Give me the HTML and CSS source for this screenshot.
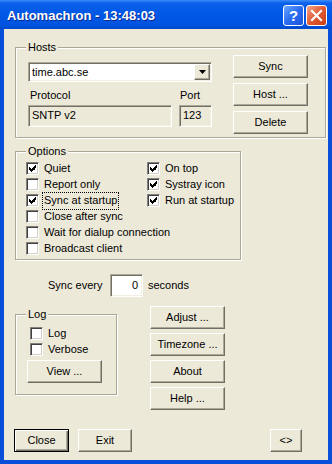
FILE: index.html
```html
<!DOCTYPE html>
<html lang="en">
<head>
    <meta charset="UTF-8">
    <meta name="viewport" content="width=device-width, initial-scale=1.0">
    <title>Automachron</title>
    <link rel="stylesheet" href="styles.css">
</head>
<body>
<div class="window">
    <div class="titlebar">
        <span class="title">Automachron - 13:48:03</span>
        <span class="tb-btn help">?</span>
        <span class="tb-btn close">
            <svg width="13" height="13" viewBox="0 0 13 13"><path d="M2 2 L11 11 M11 2 L2 11" stroke="#fff" stroke-width="2.2" stroke-linecap="square"/></svg>
        </span>
    </div>

    <div class="client">
        <!-- Hosts -->
        <div class="group hosts">
            <div class="legend">Hosts</div>
            <div class="hosts-row">
                <div class="hosts-left">
                    <div class="combo sunken">
                        <span class="combo-text">time.abc.se</span>
                        <span class="combo-btn">
                            <svg width="7" height="4" viewBox="0 0 7 4"><path d="M0 0 H7 L3.5 4 Z" fill="#000"/></svg>
                        </span>
                    </div>
                    <div class="field-labels">
                        <span class="lbl-protocol">Protocol</span>
                        <span>Port</span>
                    </div>
                    <div class="fields">
                        <div class="field sunken proto">SNTP v2</div>
                        <div class="field sunken port">123</div>
                    </div>
                </div>
                <div class="btn-col hosts-btns">
                    <button class="btn">Sync</button>
                    <button class="btn">Host ...</button>
                    <button class="btn">Delete</button>
                </div>
            </div>
        </div>

        <!-- Options -->
        <div class="group options">
            <div class="legend">Options</div>
            <div class="opts">
                <div class="opt-col first">
                    <div class="opt"><span class="check on"></span><span class="opt-label">Quiet</span></div>
                    <div class="opt"><span class="check"></span><span class="opt-label">Report only</span></div>
                    <div class="opt"><span class="check on"></span><span class="opt-label focus">Sync at startup</span></div>
                    <div class="opt"><span class="check"></span><span class="opt-label">Close after sync</span></div>
                    <div class="opt"><span class="check"></span><span class="opt-label">Wait for dialup connection</span></div>
                    <div class="opt"><span class="check"></span><span class="opt-label">Broadcast client</span></div>
                </div>
                <div class="opt-col">
                    <div class="opt"><span class="check on"></span><span class="opt-label">On top</span></div>
                    <div class="opt"><span class="check on"></span><span class="opt-label">Systray icon</span></div>
                    <div class="opt"><span class="check on"></span><span class="opt-label">Run at startup</span></div>
                </div>
            </div>
        </div>

        <div class="sync-row">
            <span class="sync-label">Sync every</span>
            <span class="num sunken">0</span>
            <span class="secs">seconds</span>
        </div>

        <div class="lower">
            <!-- Log -->
            <div class="group log">
                <div class="legend">Log</div>
                <div class="log-body">
                    <div class="opt indent"><span class="check"></span><span class="opt-label">Log</span></div>
                    <div class="opt indent"><span class="check"></span><span class="opt-label">Verbose</span></div>
                    <button class="btn view">View ...</button>
                </div>
            </div>
            <div class="btn-col side-btns">
                <button class="btn">Adjust ...</button>
                <button class="btn">Timezone ...</button>
                <button class="btn">About</button>
                <button class="btn">Help ...</button>
            </div>
        </div>

        <div class="bottom">
            <button class="btn default">Close</button>
            <button class="btn exit">Exit</button>
            <button class="btn toggle">&lt;&gt;</button>
        </div>
    </div>
</div>
</body>
</html>
```

FILE: styles.css
```css
* {
    box-sizing: border-box;
}
body {
    margin: 0;
    font-family: "Liberation Sans", Arial, sans-serif;
    font-size: 11px;
    line-height: 13px;
    color: #000;
}
.window {
    width: 332px;
    height: 464px;
    background: #0a4fd9;
    display: flex;
    flex-direction: column;
}
.titlebar {
    height: 29px;
    flex: none;
    display: flex;
    align-items: flex-start;
    background: linear-gradient(#3d8df7 0, #0b61ea 3px, #0058e6 45%, #0054e0 85%, #0049cc 100%);
}
.title {
    margin: 8px 0 0 7px;
    font-weight: bold;
    font-size: 13px;
    line-height: 15px;
    color: #fff;
    text-shadow: 1px 1px 0 #0d2a8c;
}
.tb-btn {
    margin-top: 5px;
    width: 21px;
    height: 21px;
    border: 1px solid #fff;
    border-radius: 3px;
    display: flex;
    align-items: center;
    justify-content: center;
}
.help {
    margin-left: auto;
    background: linear-gradient(135deg, #6aa6ff, #2a6cf0 50%, #1d55d8);
    color: #fff;
    font-weight: bold;
    font-size: 15px;
}
.close {
    margin: 5px 5px 0 2px;
    background: linear-gradient(135deg, #f3a78a, #e15a31 50%, #cc3f18);
}

.client {
    flex: 1;
    margin: 0 4px 4px;
    background: #ece9d8;
    display: flex;
    flex-direction: column;
}

/* group boxes */
.group {
    border: 1px solid #aca899;
    box-shadow: 1px 1px 0 #fff, inset 1px 1px 0 #fff;
}
.legend {
    width: max-content;
    margin: -7px 0 0 10px;
    padding: 0 2px;
    background: #ece9d8;
}
.sunken {
    border: 1px solid;
    border-color: #aca899 #fff #fff #aca899;
    box-shadow: inset 1px 1px 0 #716f64, inset -1px -1px 0 #f1efe2;
}

/* buttons */
.btn {
    display: block;
    width: 75px;
    height: 23px;
    padding: 0;
    font: inherit;
    color: #000;
    background: #ece9d8;
    border: 1px solid;
    border-color: #fff #716f64 #716f64 #fff;
    box-shadow: inset -1px -1px 0 #aca899;
}
.btn.default {
    border: 1px solid #000;
    box-shadow: inset 1px 1px 0 #fff, inset -1px -1px 0 #716f64, inset -2px -2px 0 #aca899;
}
.btn-col {
    display: flex;
    flex-direction: column;
    gap: 4px;
}

/* hosts */
.hosts {
    margin: 18px 2px 0 11px;
}
.hosts-row {
    display: flex;
    padding: 0 0 3px 12px;
}
.hosts-left {
    width: 184px;
    margin-top: 8px;
}
.hosts-btns {
    margin: 1px 0 0 21px;
    gap: 5px;
}
.combo {
    height: 20px;
    display: flex;
    align-items: center;
    background: #fff;
    padding-left: 3px;
}
.combo-text {
    flex: 1;
}
.combo-btn {
    width: 16px;
    height: 16px;
    margin-right: 1px;
    display: flex;
    align-items: center;
    justify-content: center;
    background: #ece9d8;
    border: 1px solid;
    border-color: #fff #716f64 #716f64 #fff;
    box-shadow: inset -1px -1px 0 #aca899;
}
.field-labels {
    display: flex;
    margin-top: 7px;
    padding-left: 2px;
}
.lbl-protocol {
    width: 150px;
}
.fields {
    display: flex;
    gap: 7px;
    margin-top: 3px;
}
.field {
    height: 22px;
    padding: 3px 3px;
}
.proto {
    width: 144px;
}
.port {
    width: 33px;
}

/* options */
.options {
    margin: 13px 0 0 11px;
    width: 226px;
}
.opts {
    display: flex;
    padding: 4px 0 1px 10px;
}
.opt-col.first {
    width: 121px;
}
.opt {
    display: flex;
    align-items: center;
    height: 13px;
    margin-bottom: 3px;
}
.check {
    flex: none;
    width: 13px;
    height: 13px;
    background: #fff;
    border: 1px solid;
    border-color: #808080 #fff #fff #808080;
    box-shadow: inset 1px 1px 0 #404040, inset -1px -1px 0 #d4d0c8;
}
.check.on {
    background: #fff url("data:image/svg+xml,%3Csvg xmlns='http://www.w3.org/2000/svg' width='7' height='7' shape-rendering='crispEdges'%3E%3Cpath d='M6 0h1v3h-1zM5 1h1v4h-1zM4 2h1v3h-1zM3 3h1v3h-1zM2 4h1v3h-1zM1 3h1v3h-1zM0 2h1v3h-1z' fill='%23000'/%3E%3C/svg%3E") no-repeat 2px 2px;
}
.opt-label {
    margin-left: 5px;
    white-space: nowrap;
}
.opt-label.focus {
    margin-left: 4px;
    padding: 1px 1px 2px;
    outline: 1px dotted #000;
}

/* sync every */
.sync-row {
    display: flex;
    align-items: center;
    margin: 14px 0 0 44px;
}
.sync-label {
    width: 62px;
}
.num {
    width: 33px;
    height: 23px;
    background: #fff;
    text-align: right;
    padding: 4px 4px 0 0;
}
.secs {
    margin-left: 5px;
}

/* log + side buttons */
.lower {
    display: flex;
    margin-top: 9px;
}
.log {
    margin: 8px 0 0 11px;
    width: 102px;
    align-self: flex-start;
}
.log-body {
    padding: 6px 0 11px 11px;
}
.opt.indent {
    margin-left: 3px;
}
.btn.view {
    margin-top: 4px;
}
.side-btns {
    margin-left: 33px;
}

/* bottom row */
.bottom {
    display: flex;
    margin: 19px 26px 0 10px;
}
.btn.default {
    width: 55px;
}
.btn.exit {
    width: 54px;
    margin-left: 9px;
}
.btn.toggle {
    width: 32px;
    margin-left: auto;
}
```
